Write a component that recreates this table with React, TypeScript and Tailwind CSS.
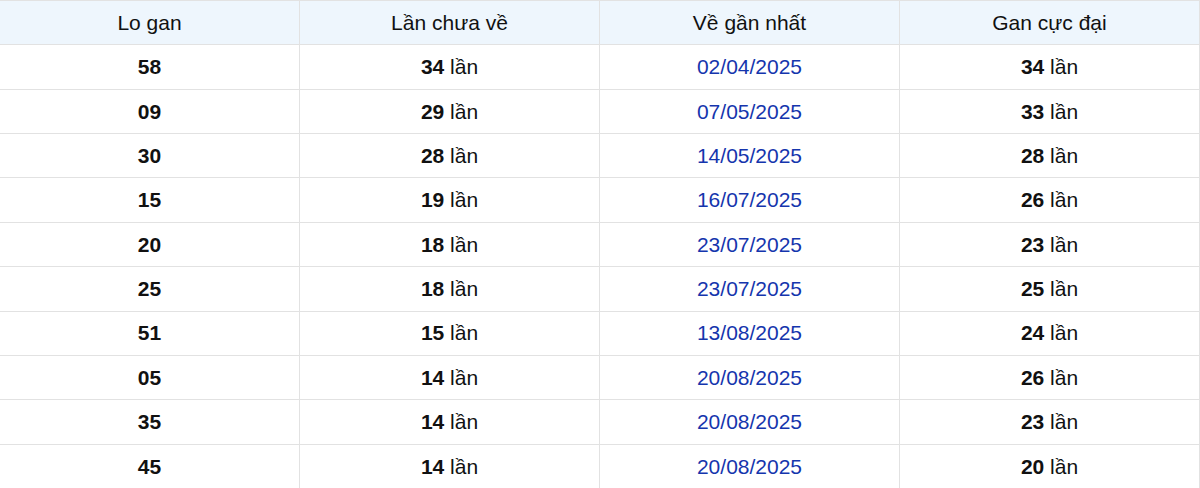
import React from "react";

const rows: [string, string, string, string][] = [
  ["58", "34", "02/04/2025", "34"],
  ["09", "29", "07/05/2025", "33"],
  ["30", "28", "14/05/2025", "28"],
  ["15", "19", "16/07/2025", "26"],
  ["20", "18", "23/07/2025", "23"],
  ["25", "18", "23/07/2025", "25"],
  ["51", "15", "13/08/2025", "24"],
  ["05", "14", "20/08/2025", "26"],
  ["35", "14", "20/08/2025", "23"],
  ["45", "14", "20/08/2025", "20"],
];

const cell =
  "flex items-center justify-center border-r border-b border-[#e2e2e2] h-[44.36px]";

export default function App() {
  return (
    <div
      className="w-[1200px] bg-white text-[21px] text-[#111]"
      style={{ fontFamily: '"Liberation Sans", Arial, sans-serif' }}
    >
      <div className="grid grid-cols-4 border-t border-[#e2e2e2]">
        {["Lo gan", "Lần chưa về", "Về gần nhất", "Gan cực đại"].map((h) => (
          <div key={h} className={`${cell} bg-[#eef6fd]`}>
            {h}
          </div>
        ))}
        {rows.map((r, i) => (
          <React.Fragment key={i}>
            <div className={`${cell} font-bold`}>{r[0]}</div>
            <div className={cell}>
              <span className="font-bold">{r[1]}</span>&nbsp;lần
            </div>
            <div className={`${cell} text-[#1535ad]`}>{r[2]}</div>
            <div className={cell}>
              <span className="font-bold">{r[3]}</span>&nbsp;lần
            </div>
          </React.Fragment>
        ))}
      </div>
    </div>
  );
}
